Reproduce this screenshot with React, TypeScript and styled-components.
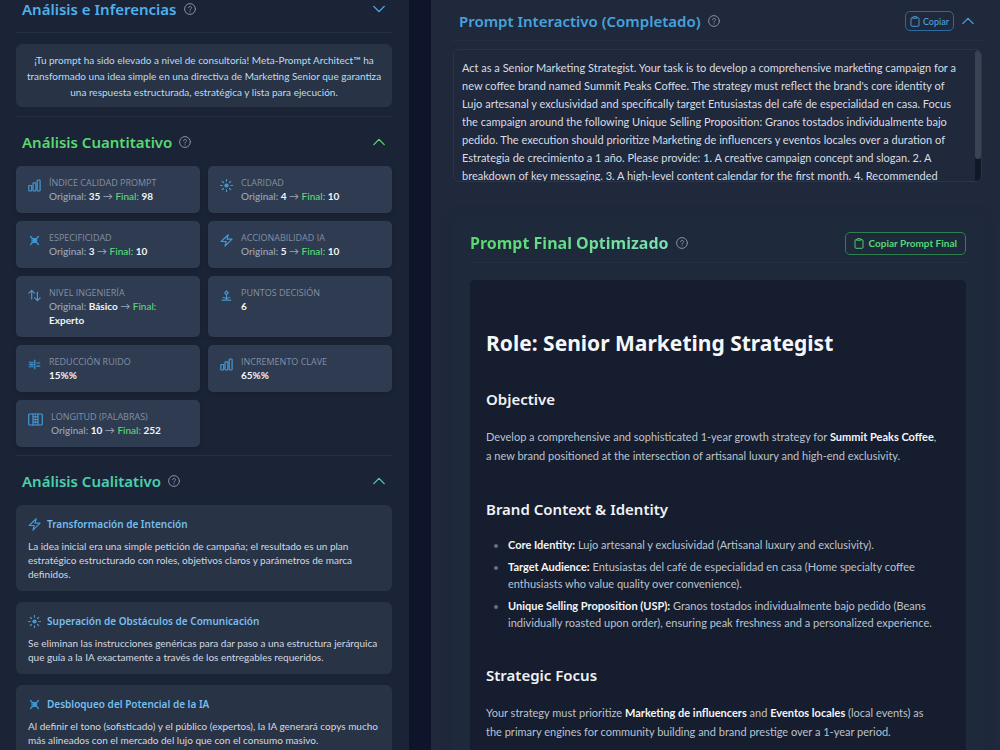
import React from 'react';
import styled, { createGlobalStyle } from 'styled-components';

const Global = createGlobalStyle`
  * { box-sizing: border-box; }
  body {
    margin: 0;
    background: #0e152a;
    color: #d5dae3;
    font-family: Lato, "Open Sans", sans-serif;
  }
  h1, h2, h3, h4, p, ul, dl, dd { margin: 0; padding: 0; }
  button { font-family: inherit; cursor: pointer; }
`;

const headingFont = '"Noto Sans", "Open Sans", sans-serif';

const Page = styled.div`
  display: grid;
  grid-template-columns: 409fr 569fr;
  column-gap: 22px;
  height: 100vh;
  overflow: hidden;
`;

const AnalysisPanel = styled.aside`
  padding: 0 17px 0 16px;
  background: #1b2436;
`;

const PromptPanel = styled.main`
  padding: 0 18px 0 22px;
  background: #20283b;
`;

const SectionHeader = styled.header<{ $first?: boolean }>`
  display: flex;
  align-items: center;
  justify-content: space-between;
  height: ${(p) => (p.$first ? 32 : 49)}px;
  padding: 0 7px 0 6px;
  padding-bottom: ${(p) => (p.$first ? 14 : 0)}px;
`;

const Divider = styled.hr`
  height: 1px;
  margin: 0;
  border: 0;
  background: #252f42;
`;

const TitleGroup = styled.div<{ $gap?: number }>`
  display: flex;
  align-items: center;
  gap: ${(p) => p.$gap ?? 7}px;
`;

const SectionTitle = styled.h2<{ $color: string }>`
  color: ${(p) => p.$color};
  font: 600 15px/18px ${headingFont};
`;

const IconButton = styled.button<{ $color: string }>`
  display: flex;
  padding: 0;
  border: 0;
  background: none;
  color: ${(p) => p.$color};
`;

const Svg = styled.svg`
  display: block;
  flex: none;
  fill: none;
  stroke: currentColor;
  stroke-linecap: round;
  stroke-linejoin: round;
`;

const Announcement = styled.p`
  margin: 11px 0 9px;
  padding: 8px 10px 7px;
  border-radius: 6px;
  background: #283345;
  color: #b9ddf3;
  font-size: 10px;
  line-height: 16px;
  text-align: center;
`;

const MetricGrid = styled.dl`
  display: grid;
  grid-template-columns: 1fr 1fr;
  gap: 8px;
  margin-bottom: 8px;
`;

const MetricCard = styled.div`
  display: flex;
  gap: 8px;
  padding: 10px 11px 10px 12px;
  border-radius: 5px;
  background: #2f3b50;
  box-shadow: 0 2px 4px rgba(10, 16, 32, 0.2);
  color: #4299d6;
`;

const MetricIcon = styled.span`
  padding-top: 3px;
`;

const MetricBody = styled.div`
  min-width: 0;
`;

const MetricLabel = styled.dt`
  color: #8290a5;
  font: 400 9px/13px "Open Sans", sans-serif;
`;

const MetricValue = styled.dd`
  max-width: 112px;
  color: #9ba8bb;
  font-size: 10px;
  font-weight: 500;
  line-height: 14px;
`;

const Amount = styled.strong`
  color: #f1f4f8;
  font-weight: 700;
`;

const FinalTag = styled.span`
  color: #56dc78;
`;

const InsightList = styled.div`
  display: grid;
  gap: 11px;
`;

const InsightCard = styled.article`
  padding: 10px 10px 10px 12px;
  border-radius: 6px;
  background: #283345;
  color: #4299d6;
`;

const InsightTitle = styled.h3`
  color: #74bff0;
  font: 600 10px/18px ${headingFont};
`;

const InsightText = styled.p`
  margin-top: 6px;
  color: #d3d9e2;
  font-size: 10px;
  line-height: 14px;
`;

const PromptHeader = styled.header`
  display: flex;
  align-items: center;
  justify-content: space-between;
  height: 40px;
  padding: 2px 8px 0 6px;
`;

const Actions = styled.div`
  display: flex;
  align-items: center;
  gap: 8px;
`;

const CopyButton = styled.button<{ $tone: 'blue' | 'green' }>`
  display: flex;
  align-items: center;
  gap: 3px;
  height: 20px;
  padding: 0 4px;
  border: 1px solid #2d6a9c;
  border-radius: 5px;
  background: none;
  color: #4aa3dc;
  font-size: 9px;
  font-weight: 500;
  ${(p) =>
    p.$tone === 'green' &&
    `
    gap: 5px;
    height: 23px;
    padding: 0 8px;
    border-color: #2f8050;
    color: #55d877;
    font-size: 10px;
    font-weight: 700;
  `}
`;

const PromptBox = styled.div`
  display: grid;
  grid-template-columns: 1fr 6px;
  height: 133px;
  margin-top: 8px;
  overflow: hidden;
  border: 1px solid #2b3548;
  border-radius: 6px;
`;

const PromptText = styled.p`
  padding: 9px 8px 0;
  color: #d8dde5;
  font-size: 11px;
  line-height: 18px;
`;

const ScrollTrack = styled.div`
  background: #111929;
`;

const ScrollThumb = styled.div`
  height: 81%;
  border-radius: 3px;
  background: #3a4353;
`;

const FinalCard = styled.section`
  margin: 34px -2px 0 -1px;
  padding: 8px 18px 0;
  border-radius: 8px;
  background: #1e293b;
  box-shadow: 0 0 10px #1e293b;
`;

const FinalHeader = styled.header`
  display: flex;
  align-items: center;
  justify-content: space-between;
  height: 38px;
`;

const FinalTitle = styled.h2`
  background: linear-gradient(90deg, #58d968, #7ce2b4);
  background-clip: text;
  -webkit-background-clip: text;
  color: transparent;
  font: 700 16px/22px ${headingFont};
`;

const Document = styled.article`
  min-height: 100vh;
  margin-top: 17px;
  padding: 47px 26px 47px 16px;
  border-radius: 5px;
  background: #151d2e;
  color: #bcc3cf;
  font-size: 11px;

  strong { color: #f3f5f8; font-weight: 700; }
`;

const DocTitle = styled.h1`
  color: #f6f7fa;
  font: 700 21px/32px ${headingFont};
`;

const DocHeading = styled.h2`
  margin-top: 30px;
  color: #f0f2f6;
  font: 600 15px/20px ${headingFont};

  p + &, ul + & { margin-top: 34px; }
`;

const Paragraph = styled.p`
  margin-top: 18px;
  line-height: 19px;
`;

const BulletList = styled.ul`
  display: grid;
  gap: 5px;
  margin-top: 17px;
  padding-left: 22px;
  line-height: 17px;

  li::marker { color: #667085; }
`;

const Chevron = ({ up }: { up?: boolean }) => (
  <Svg width="12" height="12" viewBox="0 0 12 12" strokeWidth="1.3">
    <path d={up ? 'M.8 8.6 6 3.4l5.2 5.2' : 'm.8 3.4 5.2 5.2 5.2-5.2'} />
  </Svg>
);

const Help = () => (
  <IconButton type="button" aria-label="Ayuda" $color="#8791a3">
    <Svg width="12" height="12" viewBox="0 0 12 12" strokeWidth="1">
      <circle cx="6" cy="6" r="5.4" />
      <path d="M4.5 4.7c.2-1.900 3.200-1.700 3 .1C7.400 6 6 5.900 6 7.100M6 8.800v.1" />
    </Svg>
  </IconButton>
);

const Clipboard = () => (
  <Svg width="10" height="11" viewBox="0 0 10 11" strokeWidth="0.9">
    <path d="M3 1.700H2a1 1 0 0 0-1 1v6.600a1 1 0 0 0 1 1h6a1 1 0 0 0 1-1V2.700a1 1 0 0 0-1-1H7M3 1.200a.6.600 0 0 1 .6-.6h2.800a.6.600 0 0 1 .6.600v1H3z" />
  </Svg>
);

type IconName = 'bars' | 'sun' | 'target' | 'bolt' | 'arrows' | 'decision' | 'noise' | 'columns';

const iconShapes: Record<IconName, React.ReactNode> = {
  bars: (
    <>
      <rect x=".8" y="6.500" width="2.900" height="5.500" rx=".8" />
      <rect x="5" y="3.800" width="2.900" height="8.200" rx=".8" />
      <rect x="9.200" y="1" width="2.900" height="11" rx=".8" />
    </>
  ),
  sun: (
    <>
      <circle cx="6.500" cy="6.500" r="2.100" fill="currentColor" stroke="none" />
      <path d="M6.500.5v1.700M6.500 10.800v1.700M.5 6.500h1.700M10.800 6.500h1.700M2.300 2.300l1.200 1.200M9.500 9.500l1.200 1.200M2.300 10.700l1.200-1.200M9.500 3.500l1.200-1.200" />
    </>
  ),
  target: (
    <>
      <path d="m2.500 2.500 8 8M10.500 2.500l-8 8" />
      <path d="M4.300 4.500h4.400v4H4.300zM6.500 4.500v4M4.300 6.500h4.400" strokeWidth="0.8" />
    </>
  ),
  bolt: <path d="M1.200 7.500 8.200.8 7 5.200h5L5 12.200l1.200-4.700z" />,
  arrows: <path d="M3.700 10V1.500M.9 4.200l2.800-2.900 2.700 2.900M9.400 3v8.500M6.600 8.800l2.800 2.900 2.700-2.900" />,
  decision: (
    <>
      <path d="m6.500 1.800 1.700 2-1.700 2-1.700-2zM6.500 5.800v4.500M3.200 8.500c1.500 0 2.500.3 3.300 1.500.8-1.200 1.800-1.500 3.300-1.500" />
      <path d="M2.300 11.200h8.400" />
    </>
  ),
  noise: (
    <>
      <path d="M6.800 2.200v8.600M8.800 5h3M8.800 8.200h3" />
      <path d="M1 4.200h4M1 6.500h5M1 8.800h4M2 4.200l3 4.600M5 4.200 2 8.800" strokeWidth="0.8" />
    </>
  ),
  columns: (
    <>
      <rect x=".7" y="1" width="13.600" height="11" rx="1" />
      <path d="M5 1v11M10 1v11M5 3.800h5M5 6.500h5M5 9.200h5" />
      <path d="M7.500 1v11" strokeWidth="0.5" />
    </>
  ),
};

const Icon = ({ name }: { name: IconName }) => {
  const width = name === 'columns' ? 15 : 13;
  return (
    <Svg width={width} height="13" viewBox={`0 0 ${width} 13`} strokeWidth="1.2" aria-hidden="true">
      {iconShapes[name]}
    </Svg>
  );
};

interface Metric {
  icon: IconName;
  label: string;
  from?: string;
  to: string;
}

const metrics: Metric[] = [
  { icon: 'bars', label: 'ÍNDICE CALIDAD PROMPT', from: '35', to: '98' },
  { icon: 'sun', label: 'CLARIDAD', from: '4', to: '10' },
  { icon: 'target', label: 'ESPECIFICIDAD', from: '3', to: '10' },
  { icon: 'bolt', label: 'ACCIONABILIDAD IA', from: '5', to: '10' },
  { icon: 'arrows', label: 'NIVEL INGENIERÍA', from: 'Básico', to: 'Experto' },
  { icon: 'decision', label: 'PUNTOS DECISIÓN', to: '6' },
  { icon: 'noise', label: 'REDUCCIÓN RUIDO', to: '15%%' },
  { icon: 'bars', label: 'INCREMENTO CLAVE', to: '65%%' },
  { icon: 'columns', label: 'LONGITUD (PALABRAS)', from: '10', to: '252' },
];

const insights: { icon: IconName; title: string; text: string }[] = [
  {
    icon: 'bolt',
    title: 'Transformación de Intención',
    text: 'La idea inicial era una simple petición de campaña; el resultado es un plan estratégico estructurado con roles, objetivos claros y parámetros de marca definidos.',
  },
  {
    icon: 'sun',
    title: 'Superación de Obstáculos de Comunicación',
    text: 'Se eliminan las instrucciones genéricas para dar paso a una estructura jerárquica que guía a la IA exactamente a través de los entregables requeridos.',
  },
  {
    icon: 'target',
    title: 'Desbloqueo del Potencial de la IA',
    text: 'Al definir el tono (sofisticado) y el público (expertos), la IA generará copys mucho más alineados con el mercado del lujo que con el consumo masivo.',
  },
];

function Section({ title, color, open, first }: { title: string; color: string; open?: boolean; first?: boolean }) {
  return (
    <SectionHeader $first={first}>
      <TitleGroup>
        <SectionTitle $color={color}>{title}</SectionTitle>
        <Help />
      </TitleGroup>
      <IconButton type="button" aria-label={title} aria-expanded={!!open} $color={color}>
        <Chevron up={open} />
      </IconButton>
    </SectionHeader>
  );
}

export default function App() {
  return (
    <Page>
      <Global />
      <AnalysisPanel>
        <Section title="Análisis e Inferencias" color="#4fb0ee" first />
        <Divider />
        <Announcement>
          ¡Tu prompt ha sido elevado a nivel de consultoría! Meta-Prompt Architect™ ha transformado una idea simple en
          una directiva de Marketing Senior que garantiza una respuesta estructurada, estratégica y lista para
          ejecución.
        </Announcement>
        <Divider />
        <Section title="Análisis Cuantitativo" color="#58d873" open />
        <MetricGrid>
          {metrics.map((m) => (
            <MetricCard key={m.label}>
              <MetricIcon>
                <Icon name={m.icon} />
              </MetricIcon>
              <MetricBody>
                <MetricLabel>{m.label}</MetricLabel>
                <MetricValue>
                  {m.from && (
                    <>
                      Original: <Amount>{m.from}</Amount> → <FinalTag>Final:</FinalTag>{' '}
                    </>
                  )}
                  <Amount>{m.to}</Amount>
                </MetricValue>
              </MetricBody>
            </MetricCard>
          ))}
        </MetricGrid>
        <Divider />
        <Section title="Análisis Cualitativo" color="#4bcfae" open />
        <InsightList>
          {insights.map((i) => (
            <InsightCard key={i.title}>
              <TitleGroup $gap={6}>
                <Icon name={i.icon} />
                <InsightTitle>{i.title}</InsightTitle>
              </TitleGroup>
              <InsightText>{i.text}</InsightText>
            </InsightCard>
          ))}
        </InsightList>
      </AnalysisPanel>

      <PromptPanel>
        <PromptHeader>
          <TitleGroup>
            <SectionTitle $color="#46a3dd">Prompt Interactivo (Completado)</SectionTitle>
            <Help />
          </TitleGroup>
          <Actions>
            <CopyButton type="button" $tone="blue">
              <Clipboard />
              Copiar
            </CopyButton>
            <IconButton type="button" aria-label="Contraer" aria-expanded $color="#46a3dd">
              <Chevron up />
            </IconButton>
          </Actions>
        </PromptHeader>
        <Divider />
        <PromptBox>
          <PromptText>
            Act as a Senior Marketing Strategist. Your task is to develop a comprehensive marketing campaign for a new
            coffee brand named Summit Peaks Coffee. The strategy must reflect the brand's core identity of Lujo
            artesanal y exclusividad and specifically target Entusiastas del café de especialidad en casa. Focus the
            campaign around the following Unique Selling Proposition: Granos tostados individualmente bajo pedido. The
            execution should prioritize Marketing de influencers y eventos locales over a duration of Estrategia de
            crecimiento a 1 año. Please provide: 1. A creative campaign concept and slogan. 2. A breakdown of key
            messaging. 3. A high-level content calendar for the first month. 4. Recommended
          </PromptText>
          <ScrollTrack>
            <ScrollThumb />
          </ScrollTrack>
        </PromptBox>

        <FinalCard>
          <FinalHeader>
            <TitleGroup>
              <FinalTitle>Prompt Final Optimizado</FinalTitle>
              <Help />
            </TitleGroup>
            <CopyButton type="button" $tone="green">
              <Clipboard />
              Copiar Prompt Final
            </CopyButton>
          </FinalHeader>
          <Divider />
          <Document>
            <DocTitle>Role: Senior Marketing Strategist</DocTitle>
            <DocHeading>Objective</DocHeading>
            <Paragraph>
              Develop a comprehensive and sophisticated 1-year growth strategy for <strong>Summit Peaks Coffee</strong>,
              a new brand positioned at the intersection of artisanal luxury and high-end exclusivity.
            </Paragraph>
            <DocHeading>Brand Context &amp; Identity</DocHeading>
            <BulletList>
              <li>
                <strong>Core Identity:</strong> Lujo artesanal y exclusividad (Artisanal luxury and exclusivity).
              </li>
              <li>
                <strong>Target Audience:</strong> Entusiastas del café de especialidad en casa (Home specialty coffee
                enthusiasts who value quality over convenience).
              </li>
              <li>
                <strong>Unique Selling Proposition (USP):</strong> Granos tostados individualmente bajo pedido (Beans
                individually roasted upon order), ensuring peak freshness and a personalized experience.
              </li>
            </BulletList>
            <DocHeading>Strategic Focus</DocHeading>
            <Paragraph>
              Your strategy must prioritize <strong>Marketing de influencers</strong> and{' '}
              <strong>Eventos locales</strong> (local events) as the primary engines for community building and brand
              prestige over a 1-year period.
            </Paragraph>
          </Document>
        </FinalCard>
      </PromptPanel>
    </Page>
  );
}
